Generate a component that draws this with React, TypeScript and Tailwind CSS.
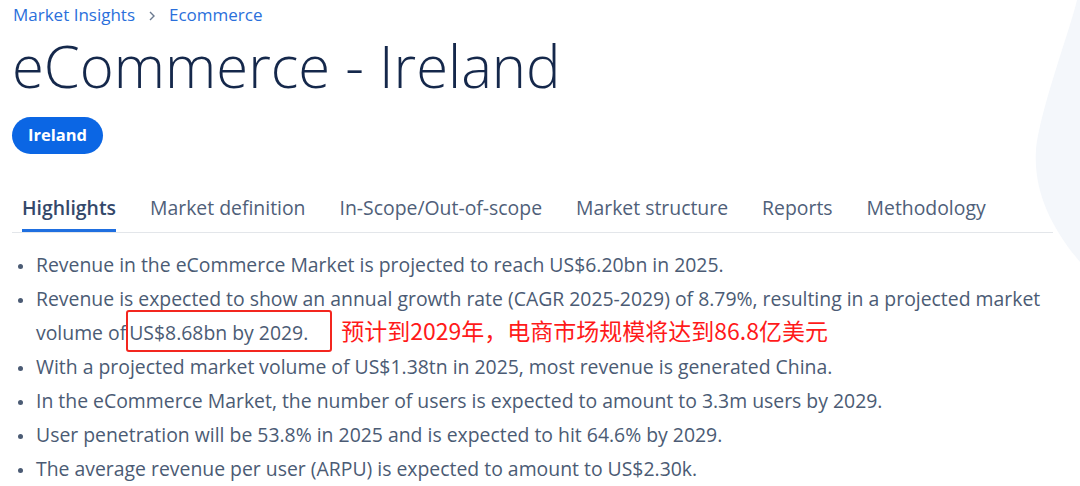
import React from "react";

const tabs = [
    "Highlights",
    "Market definition",
    "In-Scope/Out-of-scope",
    "Market structure",
    "Reports",
    "Methodology",
];

function Dot() {
    return (
        <span className="flex h-[34px] w-[24px] shrink-0 items-center pl-[6px] pt-[2px]">
            <span className="h-[5px] w-[5px] rounded-full bg-[#4b5b74]" />
        </span>
    );
}

export default function App() {
    return (
        <div className="relative h-[486px] w-[1080px] overflow-hidden bg-white font-['Open_Sans',sans-serif]">
            {/* soft background shape on the right edge */}
            <svg className="absolute right-0 top-0" width="50" height="280" viewBox="0 0 50 280">
                <path d="M47 0 C40 30 10 110 6 150 C3 195 25 232 50 262 L50 0 Z" fill="#f4f7fb" />
            </svg>

            <div className="relative pl-[12px]">
                <div className="flex h-[30px] items-center gap-[12px] pl-px text-[17px] text-[#2a6fdb]">
                    <span>Market Insights</span>
                    <svg width="10" height="12" viewBox="0 0 10 12" className="mt-px">
                        <path d="M3 2 L7 6 L3 10" fill="none" stroke="#6b7a90" strokeWidth="1.4" />
                    </svg>
                    <span>Ecommerce</span>
                </div>

                <h1 className="text-[58px] font-light leading-[72px] text-[#15284b]">eCommerce - Ireland</h1>

                <div className="mt-[15px] flex">
                    <span className="flex h-[37px] items-center rounded-full bg-[#0b66e4] px-[16px] text-[16.5px] font-bold text-white">
                        Ireland
                    </span>
                </div>

                <div className="mt-[40px] flex w-[1041px] gap-[34px] border-b border-[#e3e6ea] pl-[10px]">
                    {tabs.map((t, i) => (
                        <div
                            key={t}
                            className={
                                i === 0
                                    ? "border-b-[3px] border-[#1f6fe0] pb-[7px] text-[19.4px] font-semibold leading-[28px] text-[#34486a]"
                                    : "border-b-[3px] border-transparent pb-[7px] text-[19.4px] leading-[28px] text-[#4f6079]"
                            }
                        >
                            {t}
                        </div>
                    ))}
                </div>

                <ul className="mt-[15px] text-[19.4px] leading-[34px] text-[#4b5b74]">
                    <li className="flex">
                        <Dot />
                        <span>Revenue in the eCommerce Market is projected to reach US$6.20bn in 2025.</span>
                    </li>
                    <li className="flex">
                        <Dot />
                        <span>
                            Revenue is expected to show an annual growth rate (CAGR 2025-2029) of 8.79%, resulting in a projected market
                            <br />
                            volume of
                            <span className="rounded-[3px] border-2 border-[#f3261f] pb-[4px] pl-[1px] pr-[22px] pt-[7px]">US$8.68bn by 2029.</span>
                            <span className="ml-[9px] font-['Noto_Sans_CJK_SC',sans-serif] text-[23px] leading-[20px] text-[#ff1a1a]">
                                预计到2029年，电商市场规模将达到86.8亿美元
                            </span>
                        </span>
                    </li>
                    <li className="flex">
                        <Dot />
                        <span>With a projected market volume of US$1.38tn in 2025, most revenue is generated China.</span>
                    </li>
                    <li className="flex">
                        <Dot />
                        <span>In the eCommerce Market, the number of users is expected to amount to 3.3m users by 2029.</span>
                    </li>
                    <li className="flex">
                        <Dot />
                        <span>User penetration will be 53.8% in 2025 and is expected to hit 64.6% by 2029.</span>
                    </li>
                    <li className="flex">
                        <Dot />
                        <span>The average revenue per user (ARPU) is expected to amount to US$2.30k.</span>
                    </li>
                </ul>
            </div>
        </div>
    );
}
